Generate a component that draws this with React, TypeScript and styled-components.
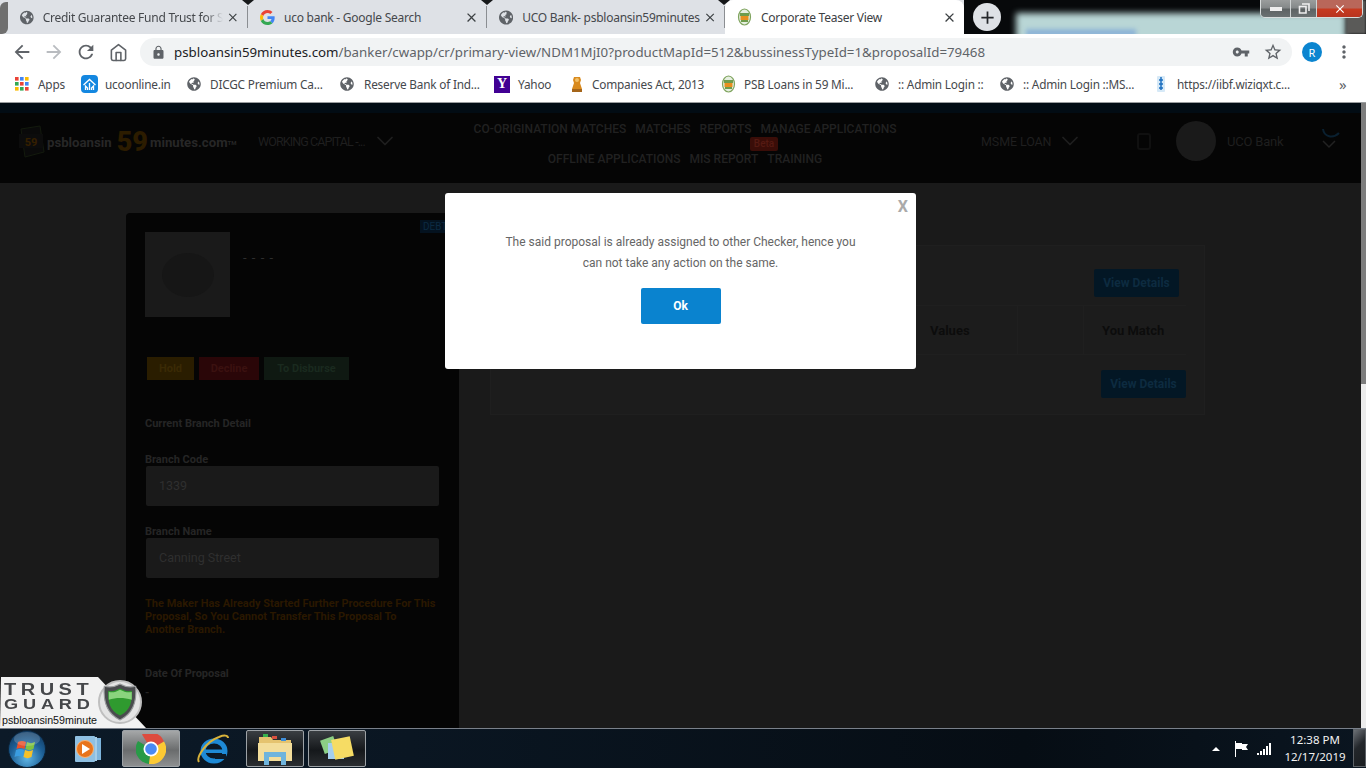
import React from 'react';
import styled, { createGlobalStyle } from 'styled-components';
import { FaGlobeAmericas } from 'react-icons/fa';
import { MdArrowBack, MdArrowForward, MdRefresh, MdLock, MdVpnKey, MdStarBorder, MdMoreVert, MdClose, MdAdd } from 'react-icons/md';
import { FiHome, FiChevronDown } from 'react-icons/fi';

const GlobalStyle = createGlobalStyle`
  html, body { margin: 0; padding: 0; height: 100%; background: #1a1a1a; }
  * { box-sizing: border-box; }
`;

const Screen = styled.div`
  position: relative;
  width: 1366px;
  height: 768px;
  overflow: hidden;
  display: flex;
  flex-direction: column;
  font-family: 'Roboto', 'Liberation Sans', sans-serif;
`;

/* ---------- tab strip ---------- */
const TabStrip = styled.div`
  position: relative;
  display: flex;
  height: 34px;
  flex: none;
  background: #dee1e6;
`;

const EdgeCap = styled.div`
  width: 8px;
  flex: none;
  background: #6f6f6f;
  margin-top: 2px;
  border-radius: 6px 0 6px 0;
`;

const Tab = styled.div<{ $active?: boolean; $w: number }>`
  position: relative;
  width: ${(p) => p.$w}px;
  flex: none;
  display: flex;
  align-items: center;
  padding: 0 7px 0 12px;
  gap: 9px;
  font-family: 'Noto Sans', sans-serif;
  font-size: 12px;
  letter-spacing: -0.25px;
  color: ${(p) => (p.$active ? '#3c4043' : '#45484c')};
  background: ${(p) => (p.$active ? '#ffffff' : '#dee1e6')};
  border-radius: ${(p) => (p.$active ? '8px 8px 0 0' : '0')};
`;

const TabLabel = styled.span<{ $fade?: boolean }>`
  flex: 1;
  margin-right: -6px;
  white-space: nowrap;
  ${(p) =>
    p.$fade
      ? `-webkit-mask-image: linear-gradient(to right, #000 90%, transparent 100%);
  mask-image: linear-gradient(to right, #000 90%, transparent 100%);`
      : ''}
`;

const TabDivider = styled.div`
  width: 1px;
  height: 22px;
  align-self: center;
  flex: none;
  background: #8b8e92;
`;

const Notch = styled.div<{ $x: number }>`
  position: absolute;
  top: 0;
  left: ${(p) => p.$x}px;
  width: 0;
  height: 0;
  border-left: 6px solid transparent;
  border-right: 6px solid transparent;
  border-top: 5px solid #16181a;
`;

const Wallpaper = styled.div`
  position: relative;
  flex: 1;
  overflow: hidden;
  background: #07090b;
  display: flex;
  align-items: center;
  padding-left: 9px;
`;

const WallpaperWindow = styled.div`
  position: absolute;
  left: 52px;
  right: 20px;
  top: 13px;
  bottom: -10px;
  background: #b9d6d6;
  filter: blur(3px);
`;

const WallpaperBar = styled.div`
  position: absolute;
  left: 62px;
  width: 110px;
  top: 29px;
  height: 8px;
  background: #8eb4d6;
  filter: blur(2px);
`;

const WallpaperEdge = styled.div`
  position: absolute;
  right: 0;
  width: 20px;
  top: 0;
  bottom: 0;
  background: #5a5a58;
  filter: blur(1px);
`;

const NewTabButton = styled.div`
  position: relative;
  width: 28px;
  height: 28px;
  border-radius: 50%;
  background: #dee1e6;
  color: #24272b;
  display: flex;
  align-items: center;
  justify-content: center;
  font-size: 21px;
`;

const WindowControls = styled.div`
  position: absolute;
  top: 0;
  right: 3px;
  height: 18px;
  display: flex;
  border: 1px solid #d8dcdc;
  border-top: none;
  border-radius: 0 0 5px 5px;
  overflow: hidden;
`;

const WindowButton = styled.div<{ $w: number; $close?: boolean }>`
  width: ${(p) => p.$w}px;
  display: flex;
  align-items: center;
  justify-content: center;
  color: #fff;
  background: ${(p) =>
    p.$close
      ? 'linear-gradient(#b9675a 0%, #b9675a 45%, #c63a20 55%, #b83420 100%)'
      : 'linear-gradient(#9a9d9d 0%, #85898a 45%, #5e6364 55%, #6a7172 100%)'};
  border-right: ${(p) => (p.$close ? 'none' : '1px solid #d0d4d4')};
`;

/* ---------- toolbar ---------- */
const Toolbar = styled.div`
  display: flex;
  align-items: center;
  height: 34px;
  flex: none;
  background: #fff;
  padding-top: 2px;
  padding-left: 6px;
`;

const NavButton = styled.div<{ $dim?: boolean }>`
  width: 32px;
  flex: none;
  display: flex;
  justify-content: center;
  font-size: 22px;
  color: ${(p) => (p.$dim ? '#b9bcc0' : '#5f6368')};
`;

const AddressBar = styled.div`
  margin-left: 6px;
  width: 1152px;
  height: 28px;
  border-radius: 14px;
  background: #f1f3f4;
  display: flex;
  align-items: center;
  padding-left: 11px;
  padding-right: 3px;
  color: #5f6368;
`;

const UrlText = styled.div`
  margin-left: 8px;
  flex: 1;
  font-family: 'Noto Sans', sans-serif;
  font-size: 13.3px;
  color: #5f6368;
  white-space: nowrap;
`;

const UrlHost = styled.span`
  color: #202124;
`;

const BarIcon = styled.div`
  display: flex;
  width: 32px;
  justify-content: center;
  font-size: 18px;
  color: #5f6368;
`;

const ProfileDot = styled.div`
  margin-left: 10px;
  width: 20px;
  height: 20px;
  border-radius: 50%;
  background: #0b85d0;
  color: #fff;
  font-size: 11px;
  display: flex;
  align-items: center;
  justify-content: center;
  font-family: 'Noto Sans', sans-serif;
`;

const MenuDots = styled.div`
  margin-left: 12px;
  display: flex;
  font-size: 20px;
  color: #5f6368;
`;

/* ---------- bookmarks ---------- */
const BookmarkBar = styled.div`
  display: flex;
  align-items: center;
  height: 34px;
  flex: none;
  background: #fff;
  padding-left: 15px;
  padding-bottom: 2px;
`;

const Bookmark = styled.div<{ $w: number; $gap: number }>`
  width: ${(p) => p.$w}px;
  flex: none;
  display: flex;
  align-items: center;
  gap: ${(p) => p.$gap}px;
  font-family: 'Noto Sans', sans-serif;
  font-size: 11.8px;
  letter-spacing: -0.2px;
  color: #45484c;
  white-space: nowrap;
`;

const Chevrons = styled.div`
  margin-left: 29px;
  font-size: 15px;
  color: #5f6368;
  font-family: 'Noto Sans', sans-serif;
`;

const YahooMark = styled.div`
  width: 16px;
  height: 17px;
  background: #410093;
  color: #fff;
  font: bold 14px 'Liberation Serif', serif;
  display: flex;
  align-items: center;
  justify-content: center;
`;

/* ---------- page ---------- */
const PageRow = styled.div`
  flex: 1;
  display: flex;
  min-height: 0;
  border-top: 1px solid #9a9d9f;
`;

const Page = styled.div`
  flex: 1;
  display: flex;
  flex-direction: column;
  min-width: 0;
  overflow: hidden;
  background: #1a1a1a;
`;

const Scrollbar = styled.div`
  width: 5px;
  flex: none;
  background: linear-gradient(#7d7d7d 0, #7d7d7d 281px, #ececec 281px);
`;

const TopStrip = styled.div`
  height: 10px;
  flex: none;
  background: #020c14;
`;

const Header = styled.div`
  height: 70px;
  flex: none;
  background: #050505;
  display: flex;
  align-items: flex-start;
  padding-left: 15px;
  color: #1f1f1f;
`;

const Logo = styled.div`
  width: 243px;
  height: 40px;
  margin-top: 9px;
  flex: none;
  display: flex;
  align-items: center;
  font-weight: 700;
  font-size: 13.2px;
  color: #272727;
  white-space: nowrap;
`;

const LogoNumber = styled.span`
  font-size: 27px;
  font-weight: 900;
  color: #2c1c00;
  margin: 0 2px 0 5px;
`;

const LogoTm = styled.sup`
  font-size: 6px;
`;

const HeaderPick = styled.div<{ $w: number }>`
  width: ${(p) => p.$w}px;
  flex: none;
  height: 56px;
  display: flex;
  align-items: center;
  justify-content: space-between;
  font-size: 12.5px;
  white-space: nowrap;
  color: #1f1f1f;
`;

const NarrowText = styled.span<{ $ls: number }>`
  letter-spacing: ${(p) => p.$ls}px;
`;

const PickChevron = styled(FiChevronDown)`
  margin-right: -7px;
  stroke-width: 1.5;
`;

const Nav = styled.div`
  width: 589px;
  flex: none;
  display: flex;
  flex-direction: column;
  align-items: center;
  gap: 14px;
  padding-top: 9px;
  padding-right: 3px;
  font-size: 12px;
  font-weight: 500;
  color: #212121;
`;

const NavRow = styled.div`
  position: relative;
  display: flex;
  gap: 9px;
  height: 16px;
  white-space: nowrap;
`;

const BetaBadge = styled.span`
  position: absolute;
  top: -15px;
  left: 202px;
  padding: 0 4px;
  background: #3a0d08;
  color: #551a12;
  font-size: 10px;
  line-height: 14px;
  border-radius: 2px;
`;

const UserArea = styled.div`
  display: flex;
  align-items: center;
  height: 56px;
  margin-left: 10px;
  font-size: 13px;
  letter-spacing: -0.2px;
`;

const Avatar = styled.div`
  width: 40px;
  height: 40px;
  border-radius: 50%;
  background: #1a1a1a;
  margin-left: 25px;
  margin-right: 11px;
`;

const Content = styled.div`
  flex: 1;
  min-height: 0;
  display: flex;
  align-items: flex-start;
  padding: 30px 0 0 126px;
  gap: 31px;
`;

const SidePanel = styled.div`
  position: relative;
  width: 333px;
  height: 515px;
  flex: none;
  background: #050505;
  border-radius: 4px 4px 0 0;
  padding: 19px 20px 0 19px;
  font-size: 11px;
  color: #252525;
`;

const DebtTag = styled.div`
  position: absolute;
  top: 7px;
  right: 0;
  width: 39px;
  padding-left: 3px;
  height: 13px;
  background: #04121f;
  color: #0c2a42;
  font-size: 10px;
  line-height: 13px;
  overflow: hidden;
`;

const ProfileRow = styled.div`
  display: flex;
  gap: 13px;
`;

const PhotoBox = styled.div`
  width: 85px;
  height: 85px;
  background: #1a1a1a;
  display: flex;
  align-items: center;
  justify-content: center;
`;

const PhotoCircle = styled.div`
  width: 52px;
  height: 44px;
  border-radius: 50%;
  background: #161616;
`;

const ProfileDash = styled.div`
  margin-top: 18px;
  font-size: 13px;
  letter-spacing: 1px;
  color: #2e2e2e;
`;

const ActionRow = styled.div`
  display: flex;
  gap: 5px;
  margin-top: 40px;
  margin-left: 2px;
`;

const ActionButton = styled.div<{ $bg: string; $fg: string; $w: number }>`
  width: ${(p) => p.$w}px;
  height: 23px;
  background: ${(p) => p.$bg};
  color: ${(p) => p.$fg};
  display: flex;
  align-items: center;
  justify-content: center;
  font-weight: 700;
  font-size: 11px;
`;

const FieldHeading = styled.div<{ $top: number }>`
  font-weight: 700;
  font-size: 11px;
  line-height: 14px;
  margin-top: ${(p) => p.$top}px;
`;

const FieldBox = styled.div`
  width: 293px;
  height: 40px;
  margin-top: -1px;
  margin-left: 1px;
  background: #1a1a1a;
  border-radius: 2px;
  display: flex;
  align-items: center;
  padding-left: 13px;
  padding-bottom: 2px;
  font-size: 12.5px;
  color: #2f2f2f;
`;

const WarningText = styled.div`
  margin-top: 19px;
  width: 292px;
  font-weight: 700;
  font-size: 11px;
  line-height: 13px;
  color: #2a1800;
`;

const DetailCard = styled.div`
  width: 715px;
  height: 170px;
  margin-top: 32px;
  flex: none;
  background: #1c1c1c;
  border: 1px solid #1f1f1f;
  padding: 23px 18px 0 0;
  display: flex;
  flex-direction: column;
`;

const ViewDetails = styled.div<{ $shift: number }>`
  align-self: flex-end;
  margin-right: ${(p) => p.$shift}px;
  width: 85px;
  height: 28px;
  background: #031725;
  color: #0d2b40;
  border-radius: 2px;
  display: flex;
  align-items: center;
  justify-content: center;
  font-size: 12px;
  font-weight: 700;
`;

const TableRow = styled.div`
  display: grid;
  grid-template-columns: 439px 88px 66px 100px;
  align-items: center;
  height: 50px;
  margin: 8px 0 15px 0;
  border-top: 1px solid #1f1f1f;
  border-bottom: 1px solid #1f1f1f;
  font-size: 13px;
  font-weight: 700;
  color: #0c0c0c;
`;

const TableCell = styled.div<{ $line?: boolean; $indent?: number }>`
  height: 100%;
  display: flex;
  align-items: center;
  padding-left: ${(p) => p.$indent ?? 0}px;
  border-right: ${(p) => (p.$line ? '1px solid #1f1f1f' : 'none')};
  white-space: nowrap;
`;

/* ---------- modal ---------- */
const Modal = styled.div`
  position: absolute;
  left: 445px;
  top: 193px;
  width: 471px;
  height: 176px;
  background: #fff;
  border-radius: 3px;
  display: flex;
  flex-direction: column;
  align-items: center;
  padding-top: 39px;
`;

const ModalClose = styled.div`
  position: absolute;
  top: 4px;
  right: 8px;
  font-size: 16px;
  font-weight: 700;
  color: #aaa;
`;

const ModalText = styled.div`
  width: 370px;
  text-align: center;
  font-size: 12px;
  line-height: 21px;
  color: #666;
`;

const OkButton = styled.div`
  margin-top: 14px;
  width: 80px;
  height: 36px;
  border-radius: 2px;
  background: #0a83cf;
  color: #fff;
  font-size: 12px;
  font-weight: 700;
  display: flex;
  align-items: center;
  justify-content: center;
`;

/* ---------- trust guard badge ---------- */
const TrustBadge = styled.div`
  position: absolute;
  left: 0;
  top: 677px;
  width: 146px;
  height: 51px;
`;

const TrustPlate = styled.div`
  position: absolute;
  inset: 0;
  background: #f2f2f2;
  clip-path: polygon(1px 0, 98px 0, 146px 51px, 0 51px);
`;

const TrustWord = styled.div<{ $top: number; $size: number; $ls: number; $stretch: number }>`
  position: absolute;
  left: 4px;
  top: ${(p) => p.$top}px;
  font-family: 'Liberation Sans', sans-serif;
  font-weight: 700;
  font-size: ${(p) => p.$size}px;
  line-height: 13px;
  letter-spacing: ${(p) => p.$ls}px;
  color: #45474a;
  transform: scaleX(${(p) => p.$stretch});
  transform-origin: left center;
`;

const TrustName = styled.div`
  position: absolute;
  left: 2px;
  bottom: 1px;
  font-family: 'Liberation Sans', sans-serif;
  font-size: 10.7px;
  line-height: 13px;
  color: #111;
`;

const TrustLens = styled.svg`
  position: absolute;
  left: 98px;
  top: 3px;
`;

/* ---------- taskbar ---------- */
const Taskbar = styled.div`
  height: 40px;
  flex: none;
  display: flex;
  align-items: stretch;
  background: linear-gradient(90deg, #0c1a28 0%, #0a1622 30%, #060d14 75%, #0a1520 100%);
  border-top: 1px solid #79808a;
  padding-left: 8px;
`;

const TaskSlot = styled.div<{ $w: number; $state?: 'active' | 'open'; $nudge?: number }>`
  width: ${(p) => p.$w}px;
  flex: none;
  margin: 1px 0 1px;
  padding-left: ${(p) => p.$nudge ?? 0}px;
  display: flex;
  align-items: center;
  justify-content: center;
  border-radius: 2px;
  background: ${(p) =>
    p.$state === 'active'
      ? 'linear-gradient(#a5a7a8, #6a6c6d 55%, #8d8f90)'
      : p.$state === 'open'
      ? 'linear-gradient(#3a3e42, #15181b 55%, #2a2d30)'
      : 'none'};
  border: ${(p) => (p.$state ? '1px solid #9da2a6' : 'none')};
`;

const Tray = styled.div`
  margin-left: auto;
  display: flex;
  align-items: center;
  color: #fff;
`;

const TrayArrow = styled.div`
  width: 0;
  height: 0;
  border-left: 4px solid transparent;
  border-right: 4px solid transparent;
  border-bottom: 4px solid #fff;
  margin-right: 14px;
`;

const Clock = styled.div`
  width: 73px;
  margin-left: 8px;
  text-align: center;
  padding-right: 3px;
  padding-bottom: 2px;
  font-family: 'Noto Sans', sans-serif;
  font-size: 11.5px;
  line-height: 17px;
  color: #f2f2f2;
  white-space: nowrap;
`;

const ShowDesktop = styled.div`
  width: 13px;
  align-self: stretch;
  margin: 0 0 1px 0;
  border: 1px solid #5c6166;
  background: linear-gradient(135deg, #6c7176 0%, #23272b 45%, #1a1d20 100%);
`;

/* ---------- drawn favicons ---------- */
const GoogleIcon = () => (
  <svg width="15" height="15" viewBox="0 0 48 48">
    <path fill="#EA4335" d="M24 9.5c3.5 0 6.7 1.2 9.2 3.6l6.9-6.9C35.9 2.4 30.5 0 24 0 14.6 0 6.5 5.4 2.6 13.2l8 6.2C12.5 13.7 17.8 9.5 24 9.5z" />
    <path fill="#4285F4" d="M46.9 24.5c0-1.6-.1-3.100-.4-4.500H24v9h12.900c-.6 3-2.200 5.500-4.700 7.200l7.700 6c4.500-4.200 7-10.300 7-17.700z" />
    <path fill="#FBBC05" d="M10.600 28.600c-.5-1.400-.8-3-.8-4.600s.3-3.200.8-4.600l-8-6.200C.9 16.500 0 20.100 0 24s.9 7.500 2.600 10.800l8-6.200z" />
    <path fill="#34A853" d="M24 48c6.500 0 11.900-2.100 15.900-5.800l-7.700-6c-2.200 1.500-4.900 2.300-8.200 2.300-6.200 0-11.500-4.200-13.400-9.900l-8 6.200C6.500 42.600 14.600 48 24 48z" />
  </svg>
);

const PsbIcon = () => (
  <svg width="15" height="18" viewBox="0 0 15 18">
    <ellipse cx="7.500" cy="9" rx="6" ry="8" fill="#e6efe0" stroke="#7ea35d" strokeWidth="1.200" />
    <rect x="3" y="5" width="9" height="3" fill="#6f9c4c" />
    <rect x="3.500" y="8" width="8" height="4" fill="#e88f1f" />
    <rect x="4" y="12" width="7" height="2" fill="#6f9c4c" />
  </svg>
);

const EmblemIcon = () => (
  <svg width="14" height="18" viewBox="0 0 14 18">
    <path d="M4 2h6l1 3-1 3 2 6H2l2-6-1-3z" fill="#d98a1e" />
    <rect x="2" y="14" width="10" height="3" fill="#a5651a" />
    <circle cx="7" cy="5" r="2" fill="#f2c067" />
  </svg>
);

const UcoIcon = () => (
  <svg width="17" height="18" viewBox="0 0 17 18">
    <rect width="17" height="18" rx="4" fill="#1487e0" />
    <path d="M2.500 10 8.500 4.500 14.500 10M4.500 15v-4l2 2v2M12.500 15v-4l-2 2v2M8.500 8v7" fill="none" stroke="#fff" strokeWidth="1.300" />
  </svg>
);

const AppsIcon = () => {
  const colors = ['#ea4335', '#4285f4', '#fbbc05', '#34a853', '#ea4335', '#4285f4', '#fbbc05', '#34a853', '#ea4335'];
  return (
    <svg width="14" height="14" viewBox="0 0 14 14">
      {colors.map((c, i) => (
        <rect key={i} x={(i % 3) * 5} y={Math.floor(i / 3) * 5} width="3.600" height="3.600" fill={c} />
      ))}
    </svg>
  );
};

const IibfIcon = () => (
  <svg width="12" height="18" viewBox="0 0 12 18">
    <rect x="2" y="1" width="8" height="16" rx="1" fill="#d6e9f7" />
    <path d="M6 2v13M4 5h4M4 9h4M4 13h4" stroke="#1c6fc0" strokeWidth="1.500" />
  </svg>
);

const LogoMark = () => (
  <svg width="32" height="36" viewBox="0 0 32 36">
    <path d="M6 5 25 2l4 26-19 5z" fill="#0a0a0a" stroke="#131a0d" strokeWidth="1" />
    <rect x="4" y="10" width="24" height="14" fill="#0c0c0c" />
    <text x="16" y="22" textAnchor="middle" fontSize="11" fontWeight="800" fill="#341f00" fontFamily="Roboto, sans-serif">59</text>
  </svg>
);

const WindowsOrb = () => (
  <svg width="38" height="38" viewBox="0 0 38 38">
    <defs>
      <radialGradient id="orb" cx="50%" cy="75%" r="75%">
        <stop offset="0" stopColor="#5fb6e6" />
        <stop offset="0.6" stopColor="#1c5f96" />
        <stop offset="1" stopColor="#123a60" />
      </radialGradient>
    </defs>
    <circle cx="19" cy="19" r="18.500" fill="url(#orb)" stroke="#0c2338" />
    <path d="M10 12c3-1.500 5-1.500 8 0l-1.500 7c-3-1.500-5-1.500-8 0z" fill="#e8502a" />
    <path d="M19 12c3 1.500 5 1.500 8 0l-1.500 7c-3 1.500-5 1.500-8 0z" fill="#7fc242" />
    <path d="M8 20c3-1.500 5-1.500 8 0l-1.500 7c-3-1.500-5-1.500-8 0z" fill="#3a9ce0" />
    <path d="M17 20c3 1.500 5 1.500 8 0l-1.500 7c-3 1.500-5 1.500-8 0z" fill="#f5c12a" />
    <ellipse cx="19" cy="9" rx="13" ry="7" fill="#fff" opacity="0.18" />
  </svg>
);

const MediaIcon = () => (
  <svg width="28" height="26" viewBox="0 0 28 26">
    <rect x="14" y="2" width="13" height="22" fill="#7db4dc" />
    <rect x="10" y="1" width="13" height="24" fill="#a5cde8" />
    <rect x="1" y="0" width="20" height="26" rx="1" fill="#8fc0e2" />
    <circle cx="11" cy="13" r="8.500" fill="#e8741c" stroke="#f7b57a" />
    <path d="M8 8l8 5-8 5z" fill="#fff" />
  </svg>
);

const ChromeIcon = () => (
  <svg width="30" height="30" viewBox="0 0 30 30">
    <path d="M15 15 6 0.500 A15 15 0 0 1 28 7.500z" fill="#dd4b3e" />
    <path d="M15 15 2 7 A15 15 0 0 0 13 30z" fill="#289a47" />
    <path d="M15 15 13 30 A15 15 0 0 0 28 7.500z" fill="#fcc934" />
    <circle cx="15" cy="15" r="7.500" fill="#fff" />
    <circle cx="15" cy="15" r="5.800" fill="#4a8af4" />
  </svg>
);

const IeIcon = () => (
  <svg width="32" height="30" viewBox="0 0 32 30">
    <ellipse cx="17" cy="17" rx="11" ry="10" fill="none" stroke="#1e8ad6" strokeWidth="5" />
    <rect x="8" y="15.500" width="19" height="3.500" fill="#1e8ad6" />
    <rect x="18" y="20" width="11" height="5" fill="#0c1a28" />
    <path d="M2 28C-1 24 8 8 22 3c5-2 9-2 9 1" fill="none" stroke="#d8b23a" strokeWidth="2" />
  </svg>
);

const FolderIcon = () => (
  <svg width="34" height="32" viewBox="0 0 34 32">
    <path d="M1 4h12l2 3h18v20H1z" fill="#e5c36f" />
    <rect x="5" y="1" width="5" height="3" fill="#37b24d" />
    <rect x="14" y="3" width="5" height="3" fill="#d9503f" />
    <rect x="23" y="5" width="5" height="3" fill="#3f8fd9" />
    <path d="M0 10h34v18H0z" fill="#f3dd9a" />
    <path d="M6 32V19h22v13h-5v-8H11v8z" fill="#6fb4dc" />
  </svg>
);

const NotesIcon = () => (
  <svg width="34" height="28" viewBox="0 0 34 28">
    <rect x="2" y="3" width="14" height="14" fill="#8ccf85" transform="rotate(-20 9 10)" />
    <rect x="8" y="8" width="16" height="16" fill="#a5cfee" />
    <rect x="13" y="3" width="19" height="20" fill="#f6dc64" transform="rotate(-12 22 13)" />
  </svg>
);

const ShieldLens = () => (
  <TrustLens width="46" height="46" viewBox="0 0 46 46">
    <circle cx="22" cy="22" r="21" fill="#e4e4e4" stroke="#bfbfbf" strokeWidth="2" />
    <g transform="translate(22 22) scale(1.12) translate(-22 -22)">
      <path d="M22 6c5 3 9 3 14 2 1 12-1 24-14 30C9 32 7 20 8 8c5 1 9 1 14-2z" fill="#4a4c4e" stroke="#9a9c9e" />
      <path d="M22 10c4 2 7 3 10.500 2 .5 9-1 18-10.500 22-9.500-4-11-13-10.500-22 3.500 1 6.500 0 10.500-2z" fill="#2f9a2f" />
      <path d="M12 13c3.500 1 6.500 0 10-2 4 2 7 3 10.500 2v7c-7-2-14-2-20.500 0z" fill="#8ad47e" />
    </g>
  </TrustLens>
);

/* ---------- data ---------- */
const tabs = [
  { title: 'Credit Guarantee Fund Trust for S', icon: <FaGlobeAmericas size={15} color="#5f6368" />, w: 239, fade: true },
  { title: 'uco bank - Google Search', icon: <GoogleIcon />, w: 238, fade: false },
  { title: 'UCO Bank- psbloansin59minutes', icon: <FaGlobeAmericas size={15} color="#5f6368" />, w: 237, fade: false },
];

const bookmarks = [
  { label: 'Apps', icon: <AppsIcon />, w: 66, gap: 9 },
  { label: 'ucoonline.in', icon: <UcoIcon />, w: 106, gap: 7 },
  { label: 'DICGC Premium Ca...', icon: <FaGlobeAmericas size={14} color="#5f6368" />, w: 153, gap: 9 },
  { label: 'Reserve Bank of Ind...', icon: <FaGlobeAmericas size={14} color="#5f6368" />, w: 154, gap: 10 },
  { label: 'Yahoo', icon: <YahooMark>Y</YahooMark>, w: 76, gap: 8 },
  { label: 'Companies Act, 2013', icon: <EmblemIcon />, w: 151, gap: 8 },
  { label: 'PSB Loans in 59 Mi...', icon: <PsbIcon />, w: 154, gap: 8 },
  { label: ':: Admin Login ::', icon: <FaGlobeAmericas size={14} color="#5f6368" />, w: 125, gap: 9 },
  { label: ':: Admin Login ::MS...', icon: <FaGlobeAmericas size={14} color="#5f6368" />, w: 155, gap: 9 },
  { label: 'https://iibf.wiziqxt.c...', icon: <IibfIcon />, w: 155, gap: 10 },
];

const App = () => (
  <Screen>
    <GlobalStyle />
    <TabStrip>
      <EdgeCap />
      {tabs.map((t) => (
        <React.Fragment key={t.title}>
          <Tab $w={t.w}>
            {t.icon}
            <TabLabel $fade={t.fade}>{t.title}</TabLabel>
            <MdClose size={15} color="#3c4043" />
          </Tab>
          <TabDivider />
        </React.Fragment>
      ))}
      <Tab $active $w={239}>
        <PsbIcon />
        <TabLabel>Corporate Teaser View</TabLabel>
        <MdClose size={15} color="#3c4043" />
      </Tab>
      <Notch $x={242} />
      <Notch $x={481} />
      <Notch $x={718} />
      <Wallpaper>
        <WallpaperWindow />
        <WallpaperBar />
        <WallpaperEdge />
        <NewTabButton>
          <MdAdd />
        </NewTabButton>
        <WindowControls>
          <WindowButton $w={30}><svg width="12" height="4"><rect width="12" height="4" fill="#eee" /></svg></WindowButton>
          <WindowButton $w={26}><svg width="12" height="11"><path d="M4 1h7v7M1.500 3.500h6.500v6.500H1.500z" fill="none" stroke="#eee" strokeWidth="1.600" /></svg></WindowButton>
          <WindowButton $w={45} $close><MdClose size={14} /></WindowButton>
        </WindowControls>
      </Wallpaper>
    </TabStrip>

    <Toolbar>
      <NavButton><MdArrowBack /></NavButton>
      <NavButton $dim><MdArrowForward /></NavButton>
      <NavButton><MdRefresh /></NavButton>
      <NavButton><FiHome size={19} /></NavButton>
      <AddressBar>
        <MdLock size={15} />
        <UrlText>
          <UrlHost>psbloansin59minutes.com</UrlHost>/banker/cwapp/cr/primary-view/NDM1MjI0?productMapId=512&amp;bussinessTypeId=1&amp;proposalId=79468
        </UrlText>
        <BarIcon><MdVpnKey /></BarIcon>
        <BarIcon><MdStarBorder size={20} /></BarIcon>
      </AddressBar>
      <ProfileDot>R</ProfileDot>
      <MenuDots><MdMoreVert /></MenuDots>
    </Toolbar>

    <BookmarkBar>
      {bookmarks.map((b) => (
        <Bookmark key={b.label} $w={b.w} $gap={b.gap}>
          {b.icon}
          {b.label}
        </Bookmark>
      ))}
      <Chevrons>»</Chevrons>
    </BookmarkBar>

    <PageRow>
      <Page>
        <TopStrip />
        <Header>
          <Logo>
            <LogoMark />
            psbloansin<LogoNumber>59</LogoNumber>minutes.com<LogoTm>TM</LogoTm>
          </Logo>
          <HeaderPick $w={134}>
            <NarrowText $ls={-0.9}>WORKING CAPITAL -...</NarrowText>
            <PickChevron size={28} />
          </HeaderPick>
          <Nav>
            <NavRow>
              <span>CO-ORIGINATION MATCHES</span>
              <span>MATCHES</span>
              <span>REPORTS</span>
              <span>MANAGE APPLICATIONS</span>
            </NavRow>
            <NavRow>
              <span>OFFLINE APPLICATIONS</span>
              <span>MIS REPORT</span>
              <span>TRAINING</span>
              <BetaBadge>Beta</BetaBadge>
            </NavRow>
          </Nav>
          <HeaderPick $w={96}>
            <NarrowText $ls={-0.1}>MSME LOAN</NarrowText>
            <PickChevron size={28} />
          </HeaderPick>
          <UserArea>
            <svg width="14" height="18" viewBox="0 0 14 18" style={{ marginLeft: 50 }}>
              <rect x="1" y="2" width="12" height="15" rx="2" fill="none" stroke="#101010" strokeWidth="2" />
            </svg>
            <Avatar />
            UCO Bank
            <svg width="20" height="26" viewBox="0 0 20 26" style={{ marginLeft: 38 }}>
              <path d="M2 1c1 8 10 10 16 4" fill="none" stroke="#0a2030" strokeWidth="2" />
              <path d="M2 13l6 6 6-6" fill="none" stroke="#222" strokeWidth="1.500" />
            </svg>
          </UserArea>
        </Header>

        <Content>
          <SidePanel>
            <DebtTag>DEBT</DebtTag>
            <ProfileRow>
              <PhotoBox><PhotoCircle /></PhotoBox>
              <ProfileDash>- - - -</ProfileDash>
            </ProfileRow>
            <ActionRow>
              <ActionButton $w={47} $bg="#2a1d00" $fg="#3a2a05">Hold</ActionButton>
              <ActionButton $w={60} $bg="#2a0608" $fg="#3b1110">Decline</ActionButton>
              <ActionButton $w={85} $bg="#0f1912" $fg="#1a2a1f">To Disburse</ActionButton>
            </ActionRow>
            <FieldHeading $top={37}>Current Branch Detail</FieldHeading>
            <FieldHeading $top={22}>Branch Code</FieldHeading>
            <FieldBox>1339</FieldBox>
            <FieldHeading $top={19}>Branch Name</FieldHeading>
            <FieldBox>Canning Street</FieldBox>
            <WarningText>
              The Maker Has Already Started Further Procedure For This Proposal, So You Cannot Transfer This Proposal To Another Branch.
            </WarningText>
            <FieldHeading $top={31}>Date Of Proposal</FieldHeading>
            <FieldHeading $top={5}>-</FieldHeading>
          </SidePanel>

          <DetailCard>
            <ViewDetails $shift={7}>View Details</ViewDetails>
            <TableRow>
              <TableCell $indent={0} />
              <TableCell $line>Values</TableCell>
              <TableCell $line />
              <TableCell $indent={18}>You Match</TableCell>
            </TableRow>
            <ViewDetails $shift={0}>View Details</ViewDetails>
          </DetailCard>
        </Content>
      </Page>
      <Scrollbar />
    </PageRow>

    <Taskbar>
      <TaskSlot $w={38}><WindowsOrb /></TaskSlot>
      <TaskSlot $w={76} $nudge={8}><MediaIcon /></TaskSlot>
      <TaskSlot $w={58} $state="active"><ChromeIcon /></TaskSlot>
      <TaskSlot $w={66}><IeIcon /></TaskSlot>
      <TaskSlot $w={58} $state="open"><FolderIcon /></TaskSlot>
      <TaskSlot $w={4} />
      <TaskSlot $w={58} $state="open"><NotesIcon /></TaskSlot>
      <Tray>
        <TrayArrow />
        <svg width="16" height="16" viewBox="0 0 16 16">
          <path d="M1.500 0v16" stroke="#fff" />
          <path d="M2 2h6v1h6l-2 3 2 3H8V8H2z" fill="#fff" />
        </svg>
        <svg width="15" height="12" viewBox="0 0 15 12" style={{ marginLeft: 7 }}>
          <rect x="0" y="10" width="2" height="2" fill="#fff" />
          <rect x="3" y="8" width="2" height="4" fill="#fff" />
          <rect x="6" y="6" width="2" height="6" fill="#fff" />
          <rect x="9" y="3" width="2" height="9" fill="#fff" />
          <rect x="12" y="0" width="2" height="12" fill="#fff" />
        </svg>
        <Clock>
          12:38 PM
          <br />
          12/17/2019
        </Clock>
        <ShowDesktop />
      </Tray>
    </Taskbar>

    <Modal>
      <ModalClose>X</ModalClose>
      <ModalText>
        The said proposal is already assigned to other Checker, hence you can not take any action on the same.
      </ModalText>
      <OkButton>Ok</OkButton>
    </Modal>

    <TrustBadge>
      <TrustPlate />
      <ShieldLens />
      <TrustWord $top={6} $size={16} $ls={3.600} $stretch={1.250}>TRUST</TrustWord>
      <TrustWord $top={21} $size={14} $ls={3.700} $stretch={1.300}>GUARD</TrustWord>
      <TrustName>psbloansin59minute</TrustName>
    </TrustBadge>
  </Screen>
);

export default App;
